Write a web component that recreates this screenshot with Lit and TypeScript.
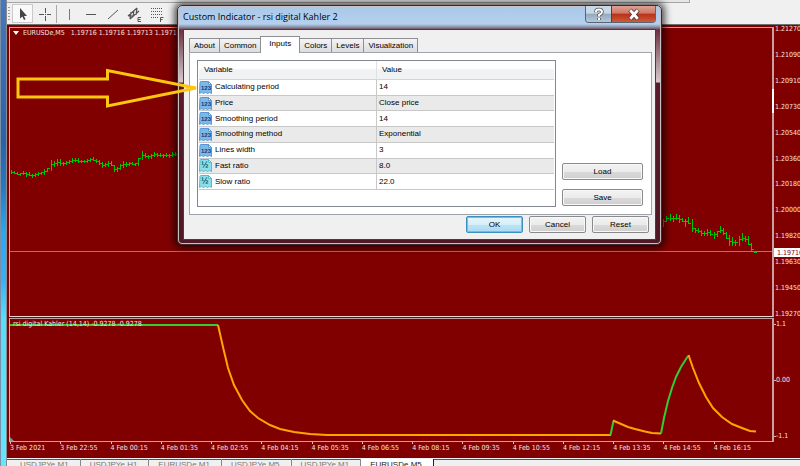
import { LitElement, html, svg, css } from "lit";
import { customElement } from "lit/decorators.js";

type Bar = [x: number, high: number, low: number];

const EARLY_BARS: Bar[] = [
  [11, 170, 173], [14, 171, 173], [17, 172, 174], [20, 173, 175], [23, 171, 174], [26, 172, 176],
  [29, 172, 175], [32, 174, 177], [35, 173, 176], [38, 172, 175], [41, 172, 174], [44, 169, 174],
  [47, 168, 171], [51, 160, 170], [54, 161, 166], [57, 159, 165], [60, 159, 165], [63, 162, 165],
  [66, 161, 164], [69, 160, 163], [72, 158, 162], [75, 158, 161], [78, 158, 162], [81, 160, 162],
  [84, 160, 162], [87, 159, 162], [90, 158, 161], [93, 157, 160], [96, 159, 162], [99, 160, 164],
  [102, 162, 167], [105, 163, 166], [108, 161, 166], [111, 161, 165], [114, 165, 171], [117, 167, 171],
  [120, 164, 169], [123, 161, 167], [126, 162, 166], [129, 162, 165], [132, 162, 164], [135, 163, 165],
  [138, 158, 165], [142, 151, 159], [145, 153, 157], [148, 155, 158], [151, 154, 158], [154, 152, 156],
  [157, 153, 156], [160, 153, 156], [163, 154, 157], [166, 153, 156], [169, 154, 157], [172, 152, 156],
  [175, 152, 155],
];

const LATE_BARS: Bar[] = [
  [663, 219, 226], [666, 216, 221], [670, 214, 220], [673, 216, 221], [676, 214, 219], [679, 215, 222],
  [682, 218, 221], [685, 219, 226], [688, 217, 223], [692, 219, 231], [695, 228, 232], [698, 228, 232],
  [701, 230, 235], [704, 231, 235], [707, 229, 235], [710, 230, 235], [714, 232, 238], [717, 231, 236],
  [720, 226, 232], [723, 228, 234], [726, 232, 238], [729, 235, 245], [732, 237, 245], [735, 240, 245],
  [739, 236, 245], [742, 233, 240], [745, 236, 241], [748, 236, 244], [751, 243, 251], [754, 251, 252],
];

const barPath = (bars: Bar[]) =>
  bars
    .map(([x, high, low], i) => {
      const next = bars[i + 1] ?? [x, high, low];
      const close = Math.round((next[1] + next[2] + high + low) / 4);
      const y = Math.max(high, Math.min(low, close));
      return `M${x} ${high}V${low + 1}M${x} ${y}h3`;
    })
    .join("");

const CHART_TEXT = css`
  font-family: "DejaVu Sans Condensed", "DejaVu Sans", sans-serif;
  font-size: 7px;
  line-height: 8px;
  color: #f4e4e4;
  white-space: nowrap;
`;

@customElement("tool-bar")
class ToolBar extends LitElement {
  static styles = css`
    :host { display: block; background: #f0f0f0; border-bottom: 1px solid #6f6f6f; }
    .upper { width: 86%; height: 2px; background: #e6e6e6; border-bottom: 1px solid #a5a5a5; border-right: 1px solid #a5a5a5; }
    .tools { display: flex; align-items: center; height: 21px; padding-left: 1px; gap: 1px; }
    .grip { width: 2px; height: 14px; margin-right: 1px; background: repeating-linear-gradient(#a0a0a0 0 1px, transparent 1px 3px); }
    .sep { width: 1px; height: 18px; background: #a8a8a8; }
    button { display: grid; place-items: center; width: 21px; height: 19px; padding: 0; border: 1px solid transparent; background: none; }
    .on { background: #f9f9f9; border-color: #c9c9c9; }
    svg { width: 16px; height: 16px; fill: none; stroke: #555; }
  `;
  tool(name: string, glyph: unknown, on = false) {
    return html`<button class=${on ? "on" : ""} aria-label=${name}><svg viewBox="0 0 16 16">${glyph}</svg></button>`;
  }
  render() {
    return html`
      <div class="upper"></div>
      <div class="tools">
        <span class="grip"></span>
        ${this.tool("Cursor", svg`<path d="M5 2V12.500L7.300 10.500L9 14L10.500 13.200L9 10H12Z" fill="#444" stroke="none"/>`, true)}
        ${this.tool("Crosshair", svg`<path d="M2 8.500H7M10 8.500H14M8.500 2V7M8.500 10V15M8 8.500h1"/>`)}
        <span class="sep"></span>
        ${this.tool("Vertical line", svg`<path d="M8.500 3V14" stroke="#777"/>`)}
        ${this.tool("Horizontal line", svg`<path d="M3 8.500H13"/>`)}
        ${this.tool("Trend line", svg`<path d="M3 13L13 4"/>`)}
        ${this.tool("Channel", svg`<path d="M1 10L10 2M3 13L12 5M4 6l-1 7M7 4L6 11M10 2L9 9M1 10h6" stroke-width="1.200"/><path d="M14 11.500h-3v4h3M11 13.500h2.500"/>`)}
        ${this.tool("Fibonacci", svg`<path d="M2 2.500H13M2 5.500H13M2 8.500H13M2 11.500H9" stroke-dasharray="1 1"/><path d="M11.500 16v-4.500h3M11 13.500h2.500"/>`)}
      </div>
    `;
  }
}

@customElement("price-chart")
class PriceChart extends LitElement {
  static styles = css`
    :host { display: grid; grid-template-columns: minmax(0, 1fr) 26px; grid-template-rows: minmax(0, 1fr) 124px 16px; background: #800000; overflow: hidden; ${CHART_TEXT} }
    .plot { position: relative; margin-left: 2px; border: 1px solid #c9a0a0; border-right-width: 2px; border-left-color: #d9b5b5; box-sizing: border-box; min-height: 0; }
    .plot.price { margin-top: 2px; margin-bottom: 1px; border-bottom-color: #ecd6d6; }
    .plot svg { position: absolute; inset: 0; width: 100%; height: 100%; fill: none; }
    .plot path { vector-effect: non-scaling-stroke; }
    .bars { stroke: #00c800; shape-rendering: crispEdges; }
    .level { stroke: #8c8080; shape-rendering: crispEdges; }
    .up { stroke: #32cd32; stroke-width: 2px; }
    .down { stroke: #ffa500; stroke-width: 2px; }
    .caption { position: absolute; left: 3px; top: 1px; display: flex; align-items: center; gap: 4px; }
    .caption::before { content: ""; border: 3px solid transparent; border-top: 4px solid #fff; border-bottom: 0; }
    .caption.plain::before { display: none; }
    .axis { position: relative; display: flex; flex-direction: column; justify-content: space-between; }
    .axis span { display: flex; align-items: center; gap: 1px; }
    .axis span::before { content: ""; width: 2px; height: 1px; background: #d9b5b5; }
    .axis.osc { padding: 2px 0; }
    .axis.osc span { gap: 0; }
    .quote { position: absolute; left: 0; top: 76%; padding: 1px 0 0 3px; background: #fff; color: #800000; }
    .mark { position: absolute; left: -2px; top: 22%; width: 2px; height: 24px; background: #fff; }
    .times { display: grid; grid-template-columns: repeat(15, minmax(0, 1fr)); margin: 0 10px 0 3px; }
    .times span::before { content: ""; display: block; width: 1px; height: 2px; background: #e0c0c0; }
  `;
  prices = ["1.21270", "1.21090", "1.20910", "1.20730", "1.20540", "1.20360", "1.20180", "1.20000", "1.19820", "1.19630", "1.19450", "1.19270"];
  times = ["3 Feb 2021", "3 Feb 22:55", "4 Feb 00:15", "4 Feb 01:35", "4 Feb 02:55", "4 Feb 04:15", "4 Feb 05:35", "4 Feb 06:55", "4 Feb 08:15", "4 Feb 09:35", "4 Feb 10:55", "4 Feb 12:15", "4 Feb 13:35", "4 Feb 14:55", "4 Feb 16:15"];
  render() {
    return html`
      <div class="plot price">
        <svg viewBox="10 28 762 288" preserveAspectRatio="none">
          <path class="level" d="M10 251.500H772" />
          <path class="bars" d=${barPath(EARLY_BARS)} />
          <path class="bars" d=${barPath(LATE_BARS)} />
        </svg>
        <div class="caption">EURUSDe,M5&nbsp;&nbsp; 1.19716 1.19716 1.19713 1.19716</div>
      </div>
      <div class="axis">
        ${this.prices.map((p) => html`<span>${p}</span>`)}
        <div class="quote">1.19716</div>
        <div class="mark"></div>
      </div>
      <div class="plot">
        <svg viewBox="10 319 762 122" preserveAspectRatio="none">
          <path class="up" d="M10 325H218" />
          <path class="down" d="M218 325L223 347L228 368L234 385L242 400L250 411L258 418L270 425L280 429L294 432L310 434L327 435H611" />
          <path class="up" d="M610.500 435L613.500 421" />
          <path class="down" d="M613 420.500L628 427L635 429L645 431.500L652 433L661 433.500" />
          <path class="up" d="M661 433.500L664 418L668 401L672 388L676 377L681 367L688 356" />
          <path class="down" d="M688.500 355L693 368L699 383L706 397L713 408L722 417L732 424L742 428L750 431L756 431.500" />
          <path d="M10 437L14 441H10Z" fill="#8090a0" />
        </svg>
        <div class="caption plain">rsi digital Kahler (14,14) -0.9278 -0.9278</div>
      </div>
      <div class="axis osc"><span>1.1</span><span>0.00</span><span>-1.1</span></div>
      <div class="times">${this.times.map((t) => html`<span>${t}</span>`)}</div>
    `;
  }
}

@customElement("indicator-dialog")
class IndicatorDialog extends LitElement {
  static styles = css`
    :host {
      display: block; box-sizing: border-box; padding: 0 5px 4px; border: 1px solid #3a2a30; border-radius: 5px;
      background: linear-gradient(#a9c8e8 0, #b4d0ee 18px, #8a93a8 21px, #6b3040 24px, #a08088 50px, #d8c8cc 76px, #5a1a2a 77px, #501824 100%);
      box-shadow: inset 0 0 0 1px #c8c0c4, 0 0 7px 3px rgba(0, 0, 0, 0.65);
      font-family: "Liberation Sans", sans-serif; font-size: 8px; line-height: 12px; color: #000;
    }
    .title { display: flex; justify-content: space-between; align-items: flex-start; height: 23px; }
    h1 { margin: 0; font: 9px/22px "Open Sans", sans-serif; color: #000; }
    .frame { display: flex; border: 1px solid #5a6470; border-top: 0; border-radius: 0 0 4px 4px; overflow: hidden; }
    .frame button { width: 25px; height: 16px; padding: 0; border: 0; border-radius: 0; display: grid; place-items: center; background: linear-gradient(#c8d8e6 45%, #93a9bd 50%, #b4c8da); }
    .frame .close { width: 44px; border-left: 1px solid #5a3a3a; background: linear-gradient(#dca090 0, #d07868 45%, #b83018 50%, #d05a38); }
    .frame svg { width: 14px; height: 14px; fill: none; }
    .client { box-sizing: border-box; padding: 6px 3px 6px 5px; background: #f0f0f0; border: 1px solid #4c3a40; }
    .tabs { display: flex; align-items: flex-end; }
    .tabs button { height: 14px; padding: 0 4px; border: 1px solid #8c8e94; border-bottom: 0; background: linear-gradient(#f4f4f4, #dcdcdc); white-space: nowrap; }
    .tabs button + button { margin-left: -1px; }
    .tabs .active { height: 17px; padding: 0 8px 2px; margin-bottom: -1px; background: #fff; position: relative; }
    button { font: inherit; color: inherit; }
    .panel { display: flex; gap: 6px; padding: 7px 8px 7px 7px; border: 1px solid #a0a4ac; background: #fff; }
    .list { flex: 1; box-sizing: border-box; height: 147px; border: 1px solid #828790; padding: 0 1px; }
    table { width: 100%; height: 129px; border-collapse: collapse; table-layout: fixed; }
    th, td { padding: 0; text-align: left; font-weight: normal; overflow: hidden; white-space: nowrap; }
    th { height: 18px; padding-left: 5px; background: linear-gradient(#fff 40%, #f1f2f4 50%); border-bottom: 1px solid #d5d5d5; }
    th + th { border-left: 1px solid #e0e0e0; }
    td { border-bottom: 1px solid #c8c8c8; }
    td + td { border-left: 1px solid #c8c8c8; padding-left: 2px; }
    tr:nth-child(even) td { background: #eaeaea; }
    .name { width: 172px; }
    .cell { display: flex; align-items: center; gap: 3px; }
    .cell svg { width: 13px; height: 13px; flex: none; }
    .cell text { font: bold 6px "Liberation Sans", sans-serif; }
    .cell .half { font-size: 9px; }
    .side { display: flex; flex-direction: column; justify-content: flex-end; gap: 9px; width: 81px; padding-bottom: 1px; }
    .push { height: 17px; padding: 0; border: 1px solid #8a8a8a; border-radius: 2px; background: linear-gradient(#f3f3f3 0, #ebebeb 50%, #dadada 52%, #cfcfcf); box-shadow: inset 0 0 0 1px #f8f8f8; }
    .footer { display: flex; justify-content: flex-end; gap: 6px; padding: 1px 3px 0 0; }
    .footer .push { width: 57px; }
    .push.default { border-color: #3c90c0; background: linear-gradient(#e6f5fc 0, #d6eefa 50%, #bce3f7 52%, #a8daf2); box-shadow: inset 0 0 0 1px #48d0f4; }
  `;
  tabs = ["About", "Common", "Inputs", "Colors", "Levels", "Visualization"];
  rows: [string, string, boolean][] = [
    ["Calculating period", "14", true],
    ["Price", "Close price", true],
    ["Smoothing period", "14", true],
    ["Smoothing method", "Exponential", true],
    ["Lines width", "3", true],
    ["Fast ratio", "8.0", false],
    ["Slow ratio", "22.0", false],
  ];
  icon(integer: boolean) {
    const fill = integer ? "#7db8ea" : "#8fdde8";
    const edge = integer ? "#5a98d4" : "#55bcc8";
    return html`<svg viewBox="0 0 13 13">
      <path d="M1 1.500Q1 .5 2 .5H9.500L12.500 3.500V12.500L10.500 11.500L8.500 12.500L6.500 11.500L4.500 12.500L2.500 11.500L.5 12.500Z" fill=${fill} stroke=${edge} />
      <path d="M9.500 .5V3.500H12.500Z" fill="#e4f4fc" stroke=${edge} />
      <text class=${integer ? "" : "half"} x="2" y="9" fill=${integer ? "#123a70" : "#0d6470"}>${integer ? "123" : "½"}</text>
    </svg>`;
  }
  render() {
    return html`
      <div class="title">
        <h1>Custom Indicator - rsi digital Kahler 2</h1>
        <div class="frame">
          <button aria-label="Help"><svg viewBox="0 0 14 14"><path d="M4 5.500V4.500Q4 2.500 7 2.500T10 5Q10 6.500 7 8V9.500M7 11v2" stroke="#555" stroke-width="3.500"/><path d="M4 5.500V4.500Q4 2.500 7 2.500T10 5Q10 6.500 7 8V9.500M7 11v2" stroke="#fff" stroke-width="2"/></svg></button>
          <button class="close" aria-label="Close"><svg viewBox="0 0 14 14"><path d="M3 3L11 12M11 3L3 12" stroke="#54383a" stroke-width="4.500"/><path d="M3.300 3.300L10.700 11.700M10.700 3.300L3.300 11.700" stroke="#fff" stroke-width="2.800"/></svg></button>
        </div>
      </div>
      <div class="client">
        <div class="tabs" role="tablist">
          ${this.tabs.map((t) => html`<button role="tab" class=${t === "Inputs" ? "active" : ""}>${t}</button>`)}
        </div>
        <div class="panel">
          <div class="list">
            <table>
              <thead><tr><th class="name">Variable</th><th>Value</th></tr></thead>
              <tbody>
                ${this.rows.map(([n, v, i]) => html`<tr><td><div class="cell">${this.icon(i)}${n}</div></td><td>${v}</td></tr>`)}
              </tbody>
            </table>
          </div>
          <div class="side">
            <button class="push">Load</button>
            <button class="push">Save</button>
          </div>
        </div>
        <div class="footer">
          <button class="push default">OK</button>
          <button class="push">Cancel</button>
          <button class="push">Reset</button>
        </div>
      </div>
    `;
  }
}

@customElement("app-root")
class AppRoot extends LitElement {
  static styles = css`
    :host { display: grid; grid-template-columns: 7px minmax(0, 1fr); position: relative; height: 100vh; overflow: hidden; background: #f0f0f0; }
    .edge { border-left: 1px solid #7a8fa8; border-right: 1px solid #8a8a90; background: linear-gradient(#4878b8, #2a62a8 30%, #2878c0 40%, #2aa8f0 50%, #38b0f8 60%, #58dcf8 68%, #60e8ff); }
    .work { display: flex; flex-direction: column; min-width: 0; }
    price-chart { flex: 1; min-height: 0; }
    .charts { display: flex; height: 8px; overflow: hidden; border-top: 1px solid #f4f4f4; box-shadow: inset 0 1px #555; font: 8px/10px "Liberation Sans", sans-serif; box-sizing: border-box; padding-left: 4px; }
    .charts a { display: block; flex: none; padding: 1px 11px 0 9px; color: #777; text-decoration: none; white-space: nowrap; border-right: 1px solid #888; }
    .charts .current { background: #fff; color: #222; border-right-color: #222; }
    indicator-dialog { position: absolute; left: 177px; top: 5px; width: 485px; }
    .pointer { position: absolute; left: 15px; top: 66px; width: 184px; height: 44px; fill: none; stroke: #ffc60e; stroke-width: 3; }
  `;
  charts = ["USDJPYe,M1", "USDJPYe,H1", "EURUSDe,M1", "USDJPYe,M5", "USDJPYe,M1", "EURUSDe,M5"];
  render() {
    return html`
      <div class="edge"></div>
      <div class="work">
        <tool-bar></tool-bar>
        <price-chart></price-chart>
        <nav class="charts">
          ${this.charts.map((c, i) => html`<a href="#" class=${i === 5 ? "current" : ""}>${c}</a>`)}
        </nav>
      </div>
      <indicator-dialog></indicator-dialog>
      <svg class="pointer" viewBox="15 66 184 44"><path d="M18 79H107.500V70.500L196 88L107.500 106V97H18Z" /></svg>
    `;
  }
}
